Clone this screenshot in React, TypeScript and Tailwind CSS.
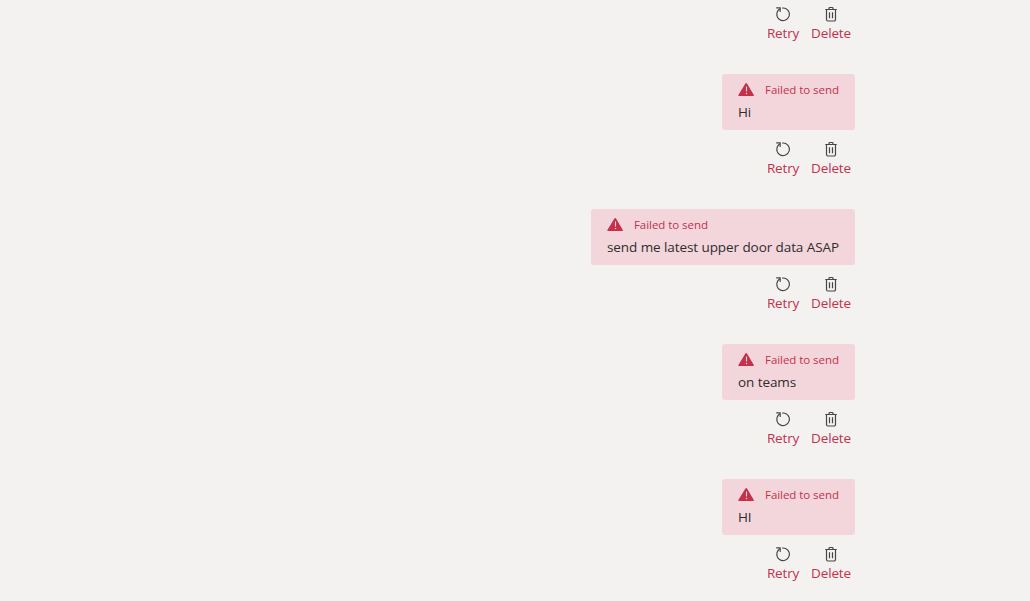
const messages = ['Hi', 'send me latest upper door data ASAP', 'on teams', 'HI'];

function RetryIcon() {
  return (
    <svg width="16" height="16" viewBox="0 0 16 16" fill="none" stroke="#484644" strokeWidth="1.1">
      <path d="M1.2 1.9H5.2V6" />
      <path d="M7.2 2.1A6.3 6.3 0 1 1 5.1 2.8" />
    </svg>
  );
}

function DeleteIcon() {
  return (
    <svg width="16" height="16" viewBox="0 0 16 16" fill="none" stroke="#484644" strokeWidth="1.2">
      <path d="M2.3 3.5h11.4M6 3.5V2.4a.9.9 0 0 1 .9-.9h2.2a.9.9 0 0 1 .9.9v1.1" />
      <path d="M3.5 3.5v10a1.5 1.5 0 0 0 1.5 1.5h6a1.5 1.5 0 0 0 1.5-1.5v-10M6.5 6.2v6M9.5 6.2v6" />
    </svg>
  );
}

function WarningIcon() {
  return (
    <svg width="16" height="16" viewBox="0 0 16 16" className="shrink-0">
      <path d="M7.4 1.5a.9.9 0 0 1 1.6 0l6.8 11.4a.8.8 0 0 1-.7 1.2h-14a.8.8 0 0 1-.7-1.2z" fill="#c4314b" />
      <path d="M8.5 4.5v5" stroke="#f3d6dc" strokeWidth="1.1" />
      <circle cx="8.5" cy="11.5" r=".75" fill="#f3d6dc" />
    </svg>
  );
}

function Actions() {
  return (
    <div className="flex gap-3 pr-1 text-[13.5px] leading-5 text-[#c4314b]">
      <button className="flex w-8 flex-col items-center gap-px whitespace-nowrap">
        <RetryIcon />
        <span className="tracking-[-0.15px]">Retry</span>
      </button>
      <button className="flex w-10 flex-col items-center gap-px whitespace-nowrap">
        <DeleteIcon />
        <span className="tracking-[-0.15px]">Delete</span>
      </button>
    </div>
  );
}

export default function App() {
  return (
    <main className="flex h-[601px] w-[1030px] flex-col items-end overflow-hidden bg-[#f3f2f1] pt-1.5 pr-[175px] font-['Open_Sans','Noto_Sans',sans-serif]">
      <Actions />
      {messages.map((message) => (
        <section key={message} className="mt-[31px] flex shrink-0 flex-col items-end">
          <div className="mb-[11px] h-14 rounded-[3px] bg-[#f3d6dc] px-4 pt-2">
            <div className="flex h-4 items-center gap-[11px] text-[11.5px] text-[#c4314b]">
              <WarningIcon />
              <span className="w-[74px] whitespace-nowrap tracking-[-0.05px]">Failed to send</span>
            </div>
            <p className="mt-1 text-[13.5px] leading-5 tracking-[-0.08px] whitespace-nowrap text-[#302c2c]">{message}</p>
          </div>
          <Actions />
        </section>
      ))}
    </main>
  );
}
